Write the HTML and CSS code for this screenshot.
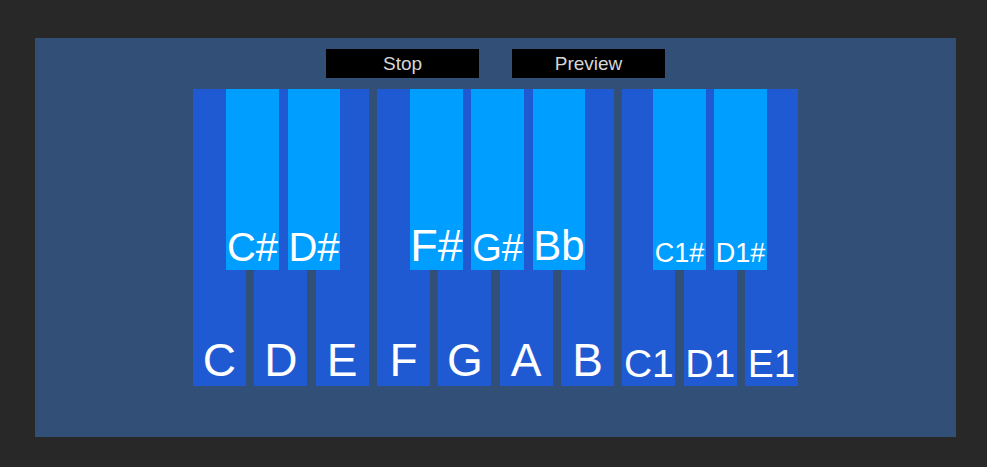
FILE: index.html
```html
<!DOCTYPE html>
<html>
<head>
<meta charset="utf-8">
<link rel="stylesheet" href="styles.css">
</head>
<body>
<div class="panel">
  <div class="controls">
    <div class="btn">Stop</div>
    <div class="btn">Preview</div>
  </div>
  <div class="keyboard">
    <div class="white"><span class="lbl w1">C</span></div>
    <div class="white"><span class="lbl w1">D</span></div>
    <div class="white"><span class="lbl w1">E</span></div>
    <div class="white"><span class="lbl w1">F</span></div>
    <div class="white"><span class="lbl w1">G</span></div>
    <div class="white"><span class="lbl w1">A</span></div>
    <div class="white"><span class="lbl w1">B</span></div>
    <div class="white"><span class="lbl w2">C1</span></div>
    <div class="white"><span class="lbl w2">D1</span></div>
    <div class="white"><span class="lbl w2">E1</span></div>

    <div class="black k-cs"><span class="lbl b40">C#</span></div>
    <div class="black k-ds"><span class="lbl b40">D#</span></div>
    <div class="black k-fs"><span class="lbl b45">F#</span></div>
    <div class="black k-gs"><span class="lbl b38">G#</span></div>
    <div class="black k-bb"><span class="lbl b42">Bb</span></div>
    <div class="black k-c1s"><span class="lbl b27">C1#</span></div>
    <div class="black k-d1s"><span class="lbl b27">D1#</span></div>
  </div>
</div>
</body>
</html>
```

FILE: styles.css
```css
html, body {
  margin: 0;
  padding: 0;
  background: #282828;
  font-family: "Liberation Sans", Arial, sans-serif;
}

.panel {
  margin: 38px 0 0 35px;
  width: 921px;
  height: 399px;
  background: #324f78;
  box-sizing: border-box;
  padding-top: 11px;
  display: flex;
  flex-direction: column;
  align-items: center;
}

.controls {
  display: flex;
  gap: 33px;
  height: 29px;
}

.btn {
  width: 153px;
  height: 29px;
  background: #000;
  color: #d6d6d6;
  font-size: 19px;
  display: flex;
  align-items: center;
  justify-content: center;
}

.keyboard {
  position: relative;
  margin-top: 11px;
  width: 605px;
  height: 297px;
  display: grid;
  grid-template-columns: repeat(10, 1fr);
  column-gap: 8.5px;
}

.white {
  background: #1f5ad3;
  display: flex;
  flex-direction: column;
  justify-content: flex-end;
  align-items: center;
}

.black {
  position: absolute;
  top: 0;
  width: 53px;
  height: 181px;
  background: #009eff;
  display: flex;
  flex-direction: column;
  justify-content: flex-end;
  align-items: center;
}

.k-cs { left: 33px; }
.k-ds { left: 95px; width: 52px; }
.k-fs { left: 217px; }
.k-gs { left: 278px; }
.k-bb { left: 340px; width: 52px; }
.k-c1s { left: 460px; }
.k-d1s { left: 521px; }

.lbl {
  color: #fff;
  line-height: 1;
  white-space: nowrap;
}

.w1 { font-size: 46px; padding-bottom: 3px; }
.w2 { font-size: 39px; padding-bottom: 3px; }
.b40 { font-size: 40px; padding-bottom: 3px; }
.b45 { font-size: 45px; padding-bottom: 2px; }
.b38 { font-size: 38px; padding-bottom: 3px; }
.b42 { font-size: 42px; padding-bottom: 3px; }
.b27 { font-size: 27px; padding-bottom: 3px; }
```
